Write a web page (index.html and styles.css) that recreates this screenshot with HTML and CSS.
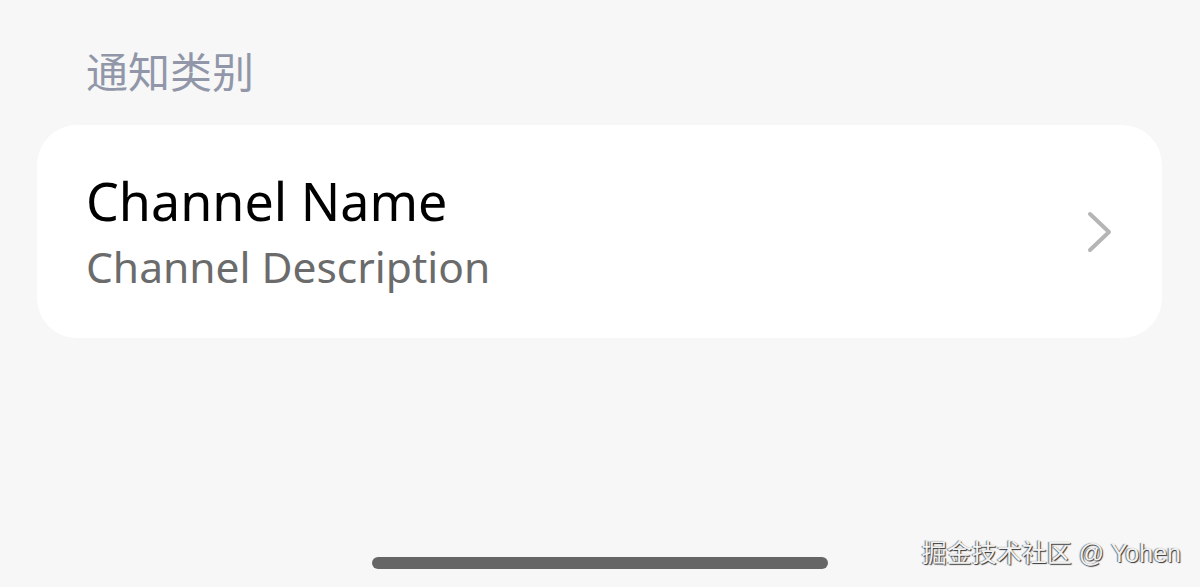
FILE: index.html
```html
<!DOCTYPE html>
<html lang="zh-CN">
<head>
    <meta charset="UTF-8">
    <meta name="viewport" content="width=device-width, initial-scale=1.0">
    <title>通知类别</title>
    <link rel="stylesheet" href="styles.css">
</head>
<body>
    <div class="screen">
        <h2 class="section-title">通知类别</h2>

        <div class="channel-card">
            <div class="channel-text">
                <div class="channel-name">Channel Name</div>
                <div class="channel-desc">Channel Description</div>
            </div>
            <svg class="chevron" width="26" height="42" viewBox="0 0 26 42">
                <path d="M3 3 L22 21 L3 39" fill="none" stroke="#b5b5b5" stroke-width="4" stroke-linecap="round" stroke-linejoin="round"/>
            </svg>
        </div>

        <div class="home-bar"></div>

        <!-- watermark -->
        <div class="watermark">掘金技术社区 @ Yohen</div>
    </div>
</body>
</html>
```

FILE: styles.css
```css
body {
    margin: 0;
    background: #f7f7f7;
    font-family: "Noto Sans", "Noto Sans CJK SC", sans-serif;
}

.screen {
    position: relative;
    height: 100vh;
    display: flex;
    flex-direction: column;
    padding: 0 38px 0 37px;
    box-sizing: border-box;
}

.section-title {
    margin: 43px 0 0 49px;
    font-family: "Noto Sans CJK SC", sans-serif;
    font-size: 42px;
    font-weight: 400;
    line-height: 54px;
    color: #9197a9;
}

.channel-card {
    margin-top: 28px;
    height: 213px;
    background: #fff;
    border-radius: 40px;
    display: flex;
    align-items: center;
    padding: 0 49px 0 49px;
}

.channel-text {
    flex: 1;
    padding-top: 10px;
    font-variant-ligatures: none;
}

.channel-name {
    font-size: 52px;
    line-height: 60px;
    color: #000;
}

.channel-desc {
    font-size: 42.5px;
    line-height: 72px;
    color: #6b6b6b;
}

.home-bar {
    margin: auto auto 18px;
    width: 456px;
    height: 12px;
    border-radius: 6px;
    background: #666;
}

.watermark {
    position: absolute;
    right: 19px;
    bottom: 18px;
    font-family: "Liberation Sans", "Noto Sans CJK SC", sans-serif;
    font-size: 25px;
    color: #f2f2f2;
    text-shadow: 1px 1px 1px #333, -1px 0 1px #777;
}
```
